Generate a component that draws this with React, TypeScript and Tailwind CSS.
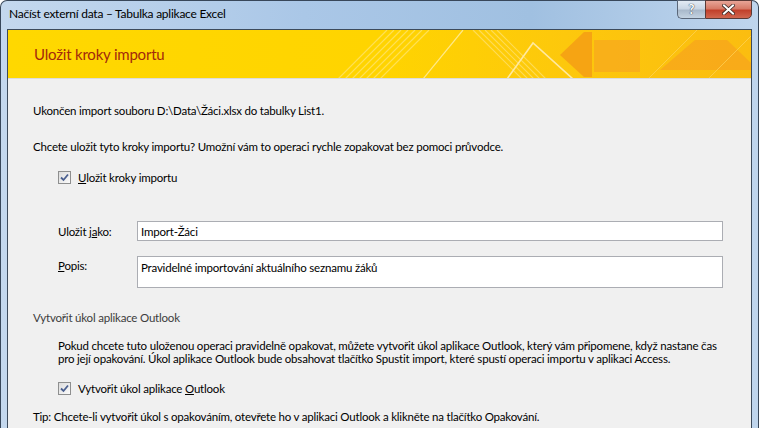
import React from "react";

function Check() {
  return (
    <span className="relative flex h-[13px] w-[13px] shrink-0 items-center justify-center border border-[#8e8f8f] bg-[linear-gradient(135deg,#dcdcdc,#fbfbfb)]">
      <svg width="9" height="9" viewBox="0 0 9 9" className="absolute">
        <path d="M1 4.5 L3.5 7 L8 1.5" fill="none" stroke="#4a5f8f" strokeWidth="1.8" />
      </svg>
    </span>
  );
}

function Banner() {
  const slash = [330, 337, 344, 351, 358, 365, 372];
  const back = [465, 471, 477, 483, 489];
  return (
    <div className="relative flex h-[49px] items-center overflow-hidden bg-[linear-gradient(90deg,#ffd800,#ffd400_50%,#fdc80c_75%,#fbbd10)] border-b border-[#dcdcdc]">
      <svg className="absolute inset-0" width="744" height="49" viewBox="0 0 744 49">
        {slash.map((s) => (
          <line key={s} x1={s} y1={49} x2={s + 49} y2={0} stroke="#ffe46a" strokeWidth="1.2" opacity="0.8" />
        ))}
        <line x1={415} y1={49} x2={455} y2={0} stroke="#ffe98a" strokeWidth="1.2" />
        {back.map((s) => (
          <line key={s} x1={s} y1={0} x2={s + 49} y2={49} stroke="#ffe06a" strokeWidth="1.2" opacity="0.8" />
        ))}
        <polyline points="499,49 525,13 565,49" fill="none" stroke="#ffe9a0" strokeWidth="1.6" />
        <polygon points="552,25 576,2 584,2 584,47 576,47" fill="#f5a014" opacity="0.9" />
        <rect x="586" y="10" width="46" height="32" fill="#f8ac1c" opacity="0.85" />
        <polygon points="652,40 687,10 719,10 744,34 744,40" fill="#f7a61c" opacity="0.8" />
        <line x1={640} y1={49} x2={689} y2={0} stroke="#ffd45a" strokeWidth="1" opacity="0.7" />
        <line x1={700} y1={49} x2={744} y2={5} stroke="#ffd45a" strokeWidth="1" opacity="0.7" />
      </svg>
      <span className="relative pl-[26px] text-[15px] text-[#a3290c] font-['Lato',sans-serif]">Uložit kroky importu</span>
    </div>
  );
}

export default function App() {
  return (
    <div className="h-[428px] w-[759px] overflow-hidden bg-white font-['Lato',sans-serif] text-[11.5px] tracking-[-0.2px] text-black">
      <div className="flex h-full flex-col rounded-t-[7px] border border-b-0 border-[#38475a] bg-[linear-gradient(90deg,#c4d8ee,#aac7e7_40%,#a0c0e1_70%,#bfd5ed)] px-[6px]">
        <div className="flex h-[28px] shrink-0 items-start justify-between">
          <span className="pl-[2px] pt-[5px] text-[12px] leading-[16px] tracking-[-0.25px]">Načíst externí data – Tabulka aplikace Excel</span>
          <div className="-mt-px flex tracking-normal">
            <div className="flex h-[19px] w-[28px] items-center justify-center rounded-bl-[5px] border border-r-0 border-[#5a6779] bg-[linear-gradient(180deg,#e3ebf4,#c9d6e4_45%,#a9b9cb_55%,#c4d3e2)] text-[13px] font-bold leading-none text-white [text-shadow:0_0_1px_#2b3a4c,0_0_1px_#2b3a4c]">?</div>
            <div className="flex h-[19px] w-[47px] items-center justify-center rounded-br-[5px] border border-[#5a3a36] bg-[linear-gradient(180deg,#e8a597,#d67a67_45%,#c1402b_55%,#d0664f)]">
              <svg width="13" height="11" viewBox="0 0 13 11">
                <path d="M2 1.5 L11 9.5 M11 1.5 L2 9.5" stroke="#3a2622" strokeWidth="3.6" strokeLinecap="square" />
                <path d="M2 1.5 L11 9.5 M11 1.5 L2 9.5" stroke="#ffffff" strokeWidth="2" strokeLinecap="square" />
              </svg>
            </div>
          </div>
        </div>
        <div className="flex flex-1 flex-col border border-b-0 border-[#3d4b5c] bg-[#f0f0f0]">
          <Banner />
          <div className="flex flex-col whitespace-nowrap pl-[25px] leading-[15px]">
            <p className="mt-[24px]">Ukončen import souboru D:\Data\Žáci.xlsx do tabulky List1.</p>
            <p className="mt-[21px]">Chcete uložit tyto kroky importu? Umožní vám to operaci rychle zopakovat bez pomoci průvodce.</p>
            <label className="mt-[16px] flex items-center gap-[7px] pl-[25px]">
              <Check />
              <span><span className="underline">U</span>ložit kroky importu</span>
            </label>
            <div className="mt-[36px] flex items-center pl-[25px]">
              <span className="w-[79px]">Uložit j<span className="underline">a</span>ko:</span>
              <div className="flex h-[20px] w-[586px] items-center border border-[#abadb3] bg-white px-[3px]">Import-Žáci</div>
            </div>
            <div className="mt-[15px] flex items-start pl-[25px]">
              <span className="w-[79px] pt-[2px]"><span className="underline">P</span>opis:</span>
              <div className="h-[32px] w-[586px] border border-[#abadb3] bg-white px-[3px] pt-[3px]">Pravidelné importování aktuálního seznamu žáků</div>
            </div>
            <p className="mt-[22px] text-[#3c3c3c]">Vytvořit úkol aplikace Outlook</p>
            <p className="mt-[14px] pl-[25px] leading-[13px]">
              Pokud chcete tuto uloženou operaci pravidelně opakovat, můžete vytvořit úkol aplikace Outlook, který vám připomene, když nastane čas
              <br />
              pro její opakování. Úkol aplikace Outlook bude obsahovat tlačítko Spustit import, které spustí operaci importu v aplikaci Access.
            </p>
            <label className="mt-[16px] flex items-center gap-[7px] pl-[25px]">
              <Check />
              <span>Vytvořit úkol aplikace <span className="underline">O</span>utlook</span>
            </label>
            <p className="mt-[13px]">Tip: Chcete-li vytvořit úkol s opakováním, otevřete ho v aplikaci Outlook a klikněte na tlačítko Opakování.</p>
          </div>
        </div>
      </div>
    </div>
  );
}
